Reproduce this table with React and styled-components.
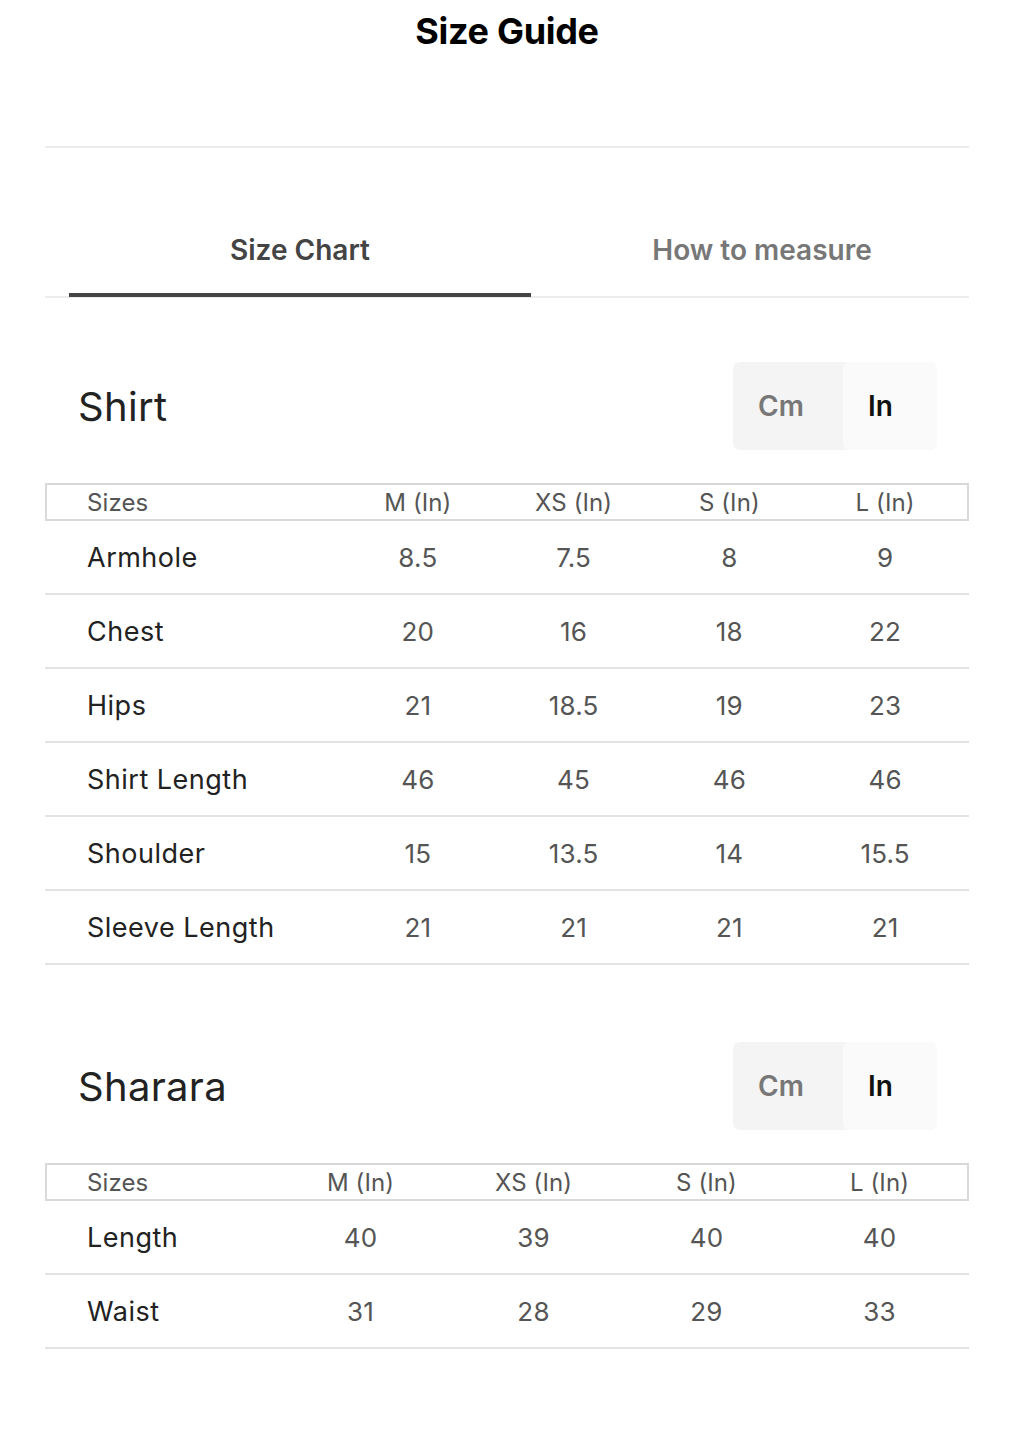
import React, { useState } from "react";
import styled, { createGlobalStyle } from "styled-components";

const Global = createGlobalStyle`
  html, body { margin: 0; padding: 0; background: #fff; }
  body { font-family: Inter, "Noto Sans", sans-serif; color: #222; }
  * { box-sizing: border-box; }
`;

const Page = styled.div`
  width: 1013px;
  padding: 0 44px 0 45px;
`;

const Title = styled.h1`
  margin: 0;
  height: 64px;
  padding-top: 9px;
  text-align: center;
  font-size: 36px;
  line-height: 44px;
  font-weight: 700;
  color: #000;
  letter-spacing: -0.3px;
`;

const Divider = styled.div`
  margin-top: 82px;
  height: 2px;
  background: #ececec;
`;

const TabBar = styled.div`
  margin-top: 85px;
  border-bottom: 2px solid #ececec;
`;

const TabRow = styled.div`
  display: flex;
  padding-left: 24px;
  margin-right: -24px;
`;

const Tab = styled.button`
  flex: 1;
  border: 0;
  background: none;
  padding: 0 0 26px;
  font-family: Inter, sans-serif;
  font-size: 28px;
  line-height: 34px;
  font-weight: 600;
  color: ${(p) => (p.$active ? "#444" : "#777")};
  border-bottom: 4px solid ${(p) => (p.$active ? "#444" : "transparent")};
  margin-bottom: -1px;
  cursor: pointer;
`;

const Section = styled.section`
  margin-top: ${(p) => p.$top}px;
`;

const SectionHead = styled.div`
  display: flex;
  align-items: center;
  justify-content: space-between;
  padding: 0 32px 0 33px;
  height: 88px;
`;

const SectionTitle = styled.h2`
  margin: 0;
  font-size: 40px;
  font-weight: 400;
  color: #222;
  letter-spacing: 0.3px;
`;

const Toggle = styled.div`
  display: flex;
  height: 88px;
  background: #f4f4f4;
  border-radius: 7px;
  overflow: hidden;
`;

const ToggleOpt = styled.button`
  border: 0;
  width: ${(p) => p.$w}px;
  padding: 0 0 0 25px;
  text-align: left;
  background: ${(p) => (p.$active ? "#fafafa" : "transparent")};
  border-radius: 7px;
  font-family: Inter, sans-serif;
  font-size: 28px;
  font-weight: 600;
  color: ${(p) => (p.$active ? "#111" : "#777")};
  cursor: pointer;
`;

const Table = styled.div`
  margin-top: 33px;
`;

const Row = styled.div`
  display: grid;
  grid-template-columns: ${(p) => p.$first}px repeat(4, 1fr);
  padding-right: ${(p) => p.$pr}px;
  align-items: center;
`;

const HeadRow = styled(Row)`
  height: 38px;
  border: 2px solid #d9d9d9;
`;

const BodyRow = styled(Row)`
  height: 74px;
  border-bottom: 2px solid #e3e3e3;
`;

const HeadCell = styled.div`
  font-size: 24px;
  color: #555;
  text-align: ${(p) => (p.$label ? "left" : "center")};
  padding-left: ${(p) => (p.$label ? "40px" : "0")};
  letter-spacing: 0.1px;
`;

const Label = styled.div`
  font-size: 27px;
  font-weight: 400;
  color: #222;
  padding-left: 42px;
  letter-spacing: 0.5px;
`;

const Value = styled.div`
  font-size: 26px;
  color: #555;
  text-align: center;
  letter-spacing: 0.2px;
`;

const sizes = ["M (In)", "XS (In)", "S (In)", "L (In)"];

const shirt = [
  ["Armhole", "8.5", "7.5", "8", "9"],
  ["Chest", "20", "16", "18", "22"],
  ["Hips", "21", "18.5", "19", "23"],
  ["Shirt Length", "46", "45", "46", "46"],
  ["Shoulder", "15", "13.5", "14", "15.5"],
  ["Sleeve Length", "21", "21", "21", "21"],
];

const sharara = [
  ["Length", "40", "39", "40", "40"],
  ["Waist", "31", "28", "29", "33"],
];

function SizeSection({ title, rows, first, pr, top }) {
  const [unit, setUnit] = useState("in");
  return (
    <Section $top={top}>
      <SectionHead>
        <SectionTitle>{title}</SectionTitle>
        <Toggle>
          <ToggleOpt $w={110} $active={unit === "cm"} onClick={() => setUnit("cm")}>
            Cm
          </ToggleOpt>
          <ToggleOpt $w={94} $active={unit === "in"} onClick={() => setUnit("in")}>
            In
          </ToggleOpt>
        </Toggle>
      </SectionHead>
      <Table>
        <HeadRow $first={first - 2} $pr={pr - 2}>
          <HeadCell $label>Sizes</HeadCell>
          {sizes.map((s) => (
            <HeadCell key={s}>{s}</HeadCell>
          ))}
        </HeadRow>
        {rows.map((r) => (
          <BodyRow key={r[0]} $first={first} $pr={pr}>
            <Label>{r[0]}</Label>
            {r.slice(1).map((v, i) => (
              <Value key={i}>{v}</Value>
            ))}
          </BodyRow>
        ))}
      </Table>
    </Section>
  );
}

export default function App() {
  const [tab, setTab] = useState(0);
  return (
    <>
      <Global />
      <Page>
        <Title>Size Guide</Title>
        <Divider />
        <TabBar>
          <TabRow>
            <Tab $active={tab === 0} onClick={() => setTab(0)}>Size Chart</Tab>
            <Tab $active={tab === 1} onClick={() => setTab(1)}>How to measure</Tab>
          </TabRow>
        </TabBar>
        <SizeSection title="Shirt" rows={shirt} first={295} pr={6} top={64} />
        <SizeSection title="Sharara" rows={sharara} first={229} pr={3} top={77} />
      </Page>
    </>
  );
}
